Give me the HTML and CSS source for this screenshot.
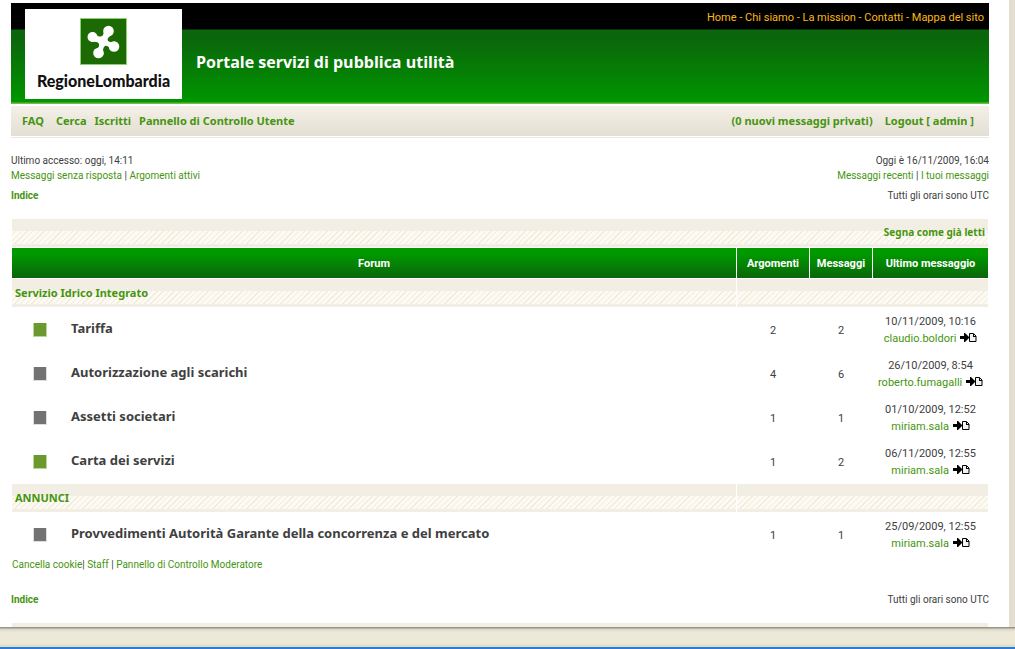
FILE: index.html
```html
<!DOCTYPE html>
<html lang="it">
<head>
<meta charset="utf-8">
<title>Portale servizi di pubblica utilità</title>
<link rel="stylesheet" href="styles.css">
</head>
<body>
<svg class="defs" aria-hidden="true">
  <symbol id="latest" viewBox="0 0 17 9">
    <path d="M0 3h4V0h1l4 4v1L5 9H4V6H0z" fill="#000"/>
    <path d="M9.500 .5h4L16 3v5.500H9.500z" fill="#f2f2f2" stroke="#000"/>
    <path d="M13 1h1v2h2v1h-3z" fill="#000"/>
  </symbol>
</svg>
<div class="page">
  <header class="banner">
    <div class="logo">
      <svg width="47" height="47" viewBox="0 0 47 47" aria-hidden="true">
        <rect x=".5" y=".5" width="46" height="46" fill="#1b6a03" stroke="#8fce78"/>
        <g fill="#fff">
          <circle cx="12.500" cy="19" r="5"/><circle cx="28.500" cy="13" r="5.300"/><circle cx="34" cy="28.500" r="5.300"/><circle cx="18.500" cy="35" r="5.300"/>
          <path d="M13 14Q18 20 22 18Q24 17 24 11L33 16Q26 20 28 23Q30 25 35 23.500L32 33Q28 27 25 28Q22 30 23.500 37L14 32Q20 30 19 26Q18 23 11 24z"/>
        </g>
      </svg>
      <span>RegioneLombardia</span>
    </div>
    <div class="banner-body">
      <nav class="top-links"><a href="#">Home</a> - <a href="#">Chi siamo</a> - <a href="#">La mission</a> - <a href="#">Contatti</a> - <a href="#">Mappa del sito</a></nav>
      <h1>Portale servizi di pubblica utilità</h1>
    </div>
  </header>
  <nav class="menu">
    <a href="#">FAQ</a><a class="wide" href="#">Cerca</a><a href="#">Iscritti</a><a href="#">Pannello di Controllo Utente</a>
    <a class="push" href="#">(0 nuovi messaggi privati)</a><a class="wide" href="#">Logout [ admin ]</a>
  </nav>
  <section class="info">
    <div>Ultimo accesso: oggi, 14:11<br><a href="#">Messaggi senza risposta</a> | <a href="#">Argomenti attivi</a></div>
    <div class="right">Oggi è 16/11/2009, 16:04<br><a href="#">Messaggi recenti</a> | <a href="#">I tuoi messaggi</a></div>
  </section>
  <div class="crumbs"><a href="#">Indice</a><span>Tutti gli orari sono UTC</span></div>
  <table class="forums">
    <colgroup><col><col class="c-topics"><col class="c-posts"><col class="c-last"></colgroup>
    <thead>
      <tr class="cat"><td class="mark" colspan="4"><a href="#">Segna come già letti</a></td></tr>
      <tr><th>Forum</th><th>Argomenti</th><th>Messaggi</th><th>Ultimo messaggio</th></tr>
    </thead>
    <tbody>
      <tr class="cat"><td><a href="#">Servizio Idrico Integrato</a></td><td colspan="3"></td></tr>
      <tr class="forum"><td><div class="name"><i class="dot new"></i><a href="#">Tariffa</a></div></td><td>2</td><td>2</td><td class="last">10/11/2009, 10:16<br><a href="#">claudio.boldori <svg class="go"><use href="#latest"/></svg></a></td></tr>
      <tr class="forum"><td><div class="name"><i class="dot"></i><a href="#">Autorizzazione agli scarichi</a></div></td><td>4</td><td>6</td><td class="last">26/10/2009, 8:54<br><a href="#">roberto.fumagalli <svg class="go"><use href="#latest"/></svg></a></td></tr>
      <tr class="forum"><td><div class="name"><i class="dot"></i><a href="#">Assetti societari</a></div></td><td>1</td><td>1</td><td class="last">01/10/2009, 12:52<br><a href="#">miriam.sala <svg class="go"><use href="#latest"/></svg></a></td></tr>
      <tr class="forum"><td><div class="name"><i class="dot new"></i><a href="#">Carta dei servizi</a></div></td><td>1</td><td>2</td><td class="last">06/11/2009, 12:55<br><a href="#">miriam.sala <svg class="go"><use href="#latest"/></svg></a></td></tr>
      <tr class="cat"><td><a href="#">ANNUNCI</a></td><td colspan="3"></td></tr>
      <tr class="forum"><td><div class="name"><i class="dot"></i><a href="#">Provvedimenti Autorità Garante della concorrenza e del mercato</a></div></td><td>1</td><td>1</td><td class="last">25/09/2009, 12:55<br><a href="#">miriam.sala <svg class="go"><use href="#latest"/></svg></a></td></tr>
    </tbody>
  </table>
  <div class="tools"><a href="#">Cancella cookie</a>| <a href="#">Staff</a> | <a href="#">Pannello di Controllo Moderatore</a></div>
  <div class="crumbs"><a href="#">Indice</a><span>Tutti gli orari sono UTC</span></div>
  <div class="next-block"></div>
</div>
<div class="status-bar"></div>
</body>
</html>
```
FILE: styles.css
```css
* { box-sizing: border-box; }
body {
  margin: 0;
  height: 100vh;
  display: flex;
  flex-direction: column;
  overflow: hidden;
  background: #fff;
  color: #404040;
  font: 11px/15px Roboto, "Noto Sans", sans-serif;
}
a { color: #45950f; text-decoration: none; }
.defs { display: none; }
.page {
  flex: 1;
  min-height: 0;
  overflow: hidden;
  padding: 3px 20px 0 11px;
  border-right: 6px solid #e5ddd0;
}
.banner {
  display: flex;
  height: 101px;
  padding-left: 14px;
  background: linear-gradient(#000 26px, #0b650b 27px, #0b650b 34px, #009600 99px, #6dbb4a 100px);
}
.logo {
  width: 157px;
  height: 90px;
  margin-top: 6px;
  padding-top: 9px;
  display: flex;
  flex-direction: column;
  align-items: center;
  background: #fff;
  color: #111;
  font: 900 16px/18px Lato, sans-serif;
}
.logo span { margin-top: 7px; }
.banner-body { flex: 1; padding: 0 5px 0 14px; }
.top-links { height: 27px; line-height: 29px; text-align: right; color: #fdb913; }
.top-links a { color: #fdb913; }
h1 { margin: 21px 0 0; color: #fff; font: 700 16px/22px "Open Sans", sans-serif; }
.menu {
  display: flex;
  gap: 8px;
  height: 30px;
  margin-top: 2px;
  padding: 0 15px 0 11px;
  background: linear-gradient(#f4f0e8, #e4dfd3);
  font: 700 11px/30px "Noto Sans", "Open Sans", sans-serif;
}
.menu .wide { margin-left: 4px; }
.menu .push { margin-left: auto; }
.info {
  display: flex;
  justify-content: space-between;
  margin-top: 1px;
  padding-top: 15px;
  border-top: 1px solid #e8e8e8;
  font-size: 10px;
}
.right { text-align: right; }
.crumbs { display: flex; justify-content: space-between; margin-top: 5px; font-size: 10px; }
.crumbs a { font-weight: 700; }
.forums { width: 100%; margin-top: 15px; table-layout: fixed; border-collapse: separate; border-spacing: 1px; }
.c-topics { width: 72px; }
.c-posts { width: 62px; }
.c-last { width: 115px; }
th, td { padding: 0; }
th { height: 30px; background: linear-gradient(#009900 20%, #0a660a); color: #fff; }
.cat td {
  height: 28px;
  padding: 0 3px 1px;
  font: 700 11px/15px "Noto Sans", "Open Sans", sans-serif;
  background:
    linear-gradient(#f2eee3, #f2eee3) 0 0 / 100% 12px no-repeat,
    linear-gradient(#f2eee3, #f2eee3) 0 100% / 100% 3px no-repeat,
    repeating-linear-gradient(135deg, #fcfaf2 0 3px, #f0ebdb 3px 4px);
}
.cat .mark { text-align: right; font-size: 10px; }
.forum td { height: 43px; padding-top: 1px; text-align: center; }
.name { display: flex; align-items: center; padding-left: 21px; }
.name a { margin-bottom: 4px; color: #404040; font: 700 13px/16px "Noto Sans", "Open Sans", sans-serif; }
.dot { width: 14px; height: 14px; margin-right: 24px; background: #737373; border: solid #ddd; border-width: 0 1px 1px; }
.dot.new { background: #6b992e; border-color: #b9d897; }
.forum .last { line-height: 17px; white-space: nowrap; }
.go { width: 17px; height: 9px; margin-left: 1px; }
.tools { padding-left: 1px; font-size: 10px; }
.tools + .crumbs { margin-top: 20px; }
.next-block { height: 28px; margin: 16px 1px 0; background: #f2eee3; }
.status-bar {
  flex: none;
  height: 22px;
  background: linear-gradient(#98968a 1px, #d8d4c4 2px, #ece9d8 5px, #ece9d8 16px, #dedbbc 20px);
  border-bottom: 2px solid #2c7bd8;
}
```
